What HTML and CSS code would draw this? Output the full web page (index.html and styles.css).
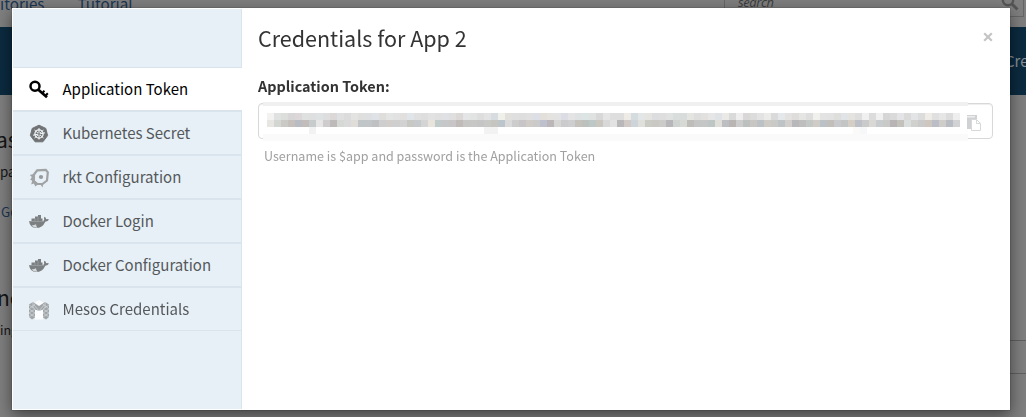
FILE: index.html
```html
<!DOCTYPE html>
<html lang="en">
<head>
<meta charset="utf-8">
<title>Credentials for App 2</title>
<link rel="stylesheet" href="styles.css">
</head>
<body>
<div class="page">
  <header class="navbar">
    <nav class="nav-links"><a>itories</a><a>Tutorial</a></nav>
    <div class="search"><span>search</span>
      <svg width="18" height="18" viewBox="0 0 18 18"><circle cx="7" cy="6" r="5.2" fill="none" stroke="#555" stroke-width="2.4"/><path d="M11 10l5.5 5.5" stroke="#555" stroke-width="3"/></svg>
    </div>
  </header>
  <div class="banner"><span>Cre</span></div>
  <main class="page-body">
    <section class="page-copy">
      <h2>as</h2>
      <p>pa</p>
      <a class="go">Go</a>
      <h2 class="second">nc</h2>
      <p class="note">ing</p>
    </section>
    <aside class="rows"></aside>
  </main>
</div>

<div class="modal">
  <ul class="sidebar">
    <li class="spacer"></li>
    <li class="item active">
      <svg class="icon" viewBox="0 0 20 20"><g fill="none" stroke="#000"><circle cx="6" cy="6.2" r="4.5" stroke-width="2.5"/><path d="M8.800 9.200L18 17.300" stroke-width="2.700"/><path d="M13.200 13.300l2.200-2.600M16.300 16l2.500-2.700" stroke-width="2"/></g></svg>
      <span>Application Token</span>
    </li>
    <li class="item">
      <svg class="icon" viewBox="0 0 20 20"><path d="M10 1.200l6.800 3.200 1.800 7.200-4.700 6.200H6.100l-4.700-6.200L3.200 4.400z" fill="#707274" stroke="#707274" stroke-linejoin="round"/><g fill="none" stroke="#f4f8fa"><circle cx="10" cy="10" r="4.100" stroke-width="1.300"/><path d="M10 4v11.500M5.500 6l9 8M14.500 6l-9 8M4 11.200l12-2.400" stroke-width="1"/></g><circle cx="10" cy="10" r="1" fill="#707274"/></svg>
      <span>Kubernetes Secret</span>
    </li>
    <li class="item">
      <svg class="icon" viewBox="0 0 20 20"><path d="M5 6.500L8.200 2.300l8.600-.5 2 2.500-.8 8.200-4.500 3.500H8.500L4.800 13z" fill="none" stroke="#a0a2a4" stroke-width="2.200"/><path d="M4.500 6L.8 7l2 2-1.600 3 2 .4-1 4 2.600-1 1.600 3 2.400-2 3 .6 1.800 2.600.6-4-6-.6-3.600-3.500z" fill="#a0a2a4"/><circle cx="12" cy="9" r="2.100" fill="#96989a"/></svg>
      <span>rkt Configuration</span>
    </li>
    <li class="item">
      <svg class="icon" viewBox="0 0 20 20"><use href="#whale"/></svg>
      <span>Docker Login</span>
    </li>
    <li class="item">
      <svg class="icon" viewBox="0 0 20 20"><defs><g id="whale"><path d="M2.500 6.500H6V4.500h3V3h3v3.500h1.500V9H2.500z" fill="#7c7f81"/><path d="M0 9h13.500q2-.2 1.700-1.500-.7-1.500.3-2.700 1.700.8 1.700 2.400 1.500-.3 2.800.4-.8 2-3.700 2.100Q13.500 16 7 16 1 16 0 9z" fill="#7c7f81"/><path d="M0 9.500h15M6 6.500v3M9 5v4.500" stroke="#a4a8aa" stroke-width=".6"/><path d="M2.500 13.500q3-.3 4.500-1.200 0 2 1.500 3.400-3.500.3-6-2.200z" fill="#d3d9dc"/></g></defs><use href="#whale"/></svg>
      <span>Docker Configuration</span>
    </li>
    <li class="item last">
      <svg class="icon" viewBox="0 0 20 20"><path d="M5 3l5-3 5 3-5 5zM6 10l4-2 4 2v9.500H6z" fill="#fbfcfd"/><path d="M0 4.500l4-2.500 6 4 6-4 4 2.500V17l-3 2.500-3-2V9.500L10 11 6 9.500v8l-3 2L0 17z" fill="#a1a5a7"/><path d="M4 2v6M0 5l6 4-6 4 6 4M6 4L0 9l6 4-6 4M16 2v6M20 5l-6 4 6 4-6 4M14 4l6 5-6 4 6 4M5 5l5 6 5-6" fill="none" stroke="#dce3e7" stroke-width=".6"/></svg>
      <span>Mesos Credentials</span>
    </li>
  </ul>
  <div class="content">
    <div class="heading"><h1>Credentials for App 2</h1>
      <svg class="close" width="10" height="10" viewBox="0 0 10 10"><path d="M1.200 1.200l7.600 7.600M8.800 1.200L1.200 8.800" stroke="#c4c4c4" stroke-width="2.200"/></svg>
    </div>
    <label>Application Token:</label>
    <div class="token-box">
      <div class="masked"><svg id="mosaic" width="709" height="39" shape-rendering="crispEdges"></svg></div>
      <svg class="copy" width="15" height="17" viewBox="0 0 15 17"><path d="M0 0h10v4H7q-3 1-3 3v7H0z" fill="#d0d1d2"/><path d="M0 1h8v1.500H0z" fill="#eee"/><path d="M4.500 4.500h5l4 4v7h-9zM9.500 4.500v4h4" fill="#fff" stroke="#d6d8da"/></svg>
    </div>
    <p class="hint">Username is $app and password is the Application Token</p>
  </div>
</div>
<script src="mosaic.js"></script>
</body>
</html>
```
FILE: styles.css
```css
* { box-sizing: border-box; }
body {
  margin: 0;
  height: 417px;
  overflow: hidden;
  background: #7f7f7f;
  font-family: "Noto Sans CJK SC", "Noto Sans", sans-serif;
}
h1, h2, p, ul { margin: 0; padding: 0; font-weight: 400; }
.page { height: 417px; overflow: hidden; }
.navbar { height: 27px; display: flex; justify-content: space-between; align-items: flex-start; padding-right: 2px; }
.nav-links { display: flex; gap: 33px; margin: -9px 0 0 0; font-size: 15.200px; line-height: 24px; color: #1b3653; }
.search { width: 300px; height: 17px; display: flex; justify-content: space-between; padding: 0 4px 0 13px; border: 1px solid #666; border-top: 0; }
.search span { margin-top: -8px; font: italic 13px/20px "Open Sans", sans-serif; letter-spacing: -.4px; color: #3c3c3c; }
.search svg { margin-top: -6px; }
.banner { height: 68px; background: #0b2b40; display: flex; justify-content: flex-end; align-items: center; }
.banner span { width: 21px; font-size: 15px; line-height: 24px; color: #8a9095; }
.page-body { display: flex; justify-content: space-between; }
.page-copy { width: 40px; color: #151515; }
.page-copy h2 { margin: 29px 0 0 -4px; font-size: 21px; line-height: 30px; }
.page-copy p { margin-top: 8px; font-size: 13.300px; line-height: 20px; }
.page-copy .go { display: block; margin: 20px 0 0 1px; font-size: 13.300px; line-height: 20px; color: #1b3653; }
.page-copy .second { margin-top: 60px; margin-left: -3px; }
.page-copy .note { margin-top: 8px; font-size: 12.500px; }
.rows { width: 20px; height: 34px; margin-top: 245px; border: solid #606060; border-width: 1px 0; }

.modal {
  position: fixed;
  left: 12px;
  top: 8px;
  width: 998px;
  height: 402px;
  display: flex;
  padding: 1px;
  background: #fff;
  box-shadow: 0 0 0 .5px rgba(0,0,0,.2), 0 5px 15px rgba(0,0,0,.5);
}
.sidebar { width: 229px; height: 400px; list-style: none; background: #e7f0f6; border-right: 1px solid #dae4ec; }
.spacer { height: 59px; border-bottom: 1px solid #dae4ec; }
.item { height: 44px; display: flex; align-items: center; gap: 13.500px; border-bottom: 2px solid #dae4ec; padding: 1px 0 0 16px; font-size: 15px; line-height: 24px; color: #55585b; }
.item span { margin-top: -1px; }
.item.active { width: 229px; background: #fff; color: #000; }
.item.last { border-bottom-width: 1px; height: 43px; }
.icon { width: 20px; height: 20px; flex: none; }
.content { flex: 1; padding: 14px 16px 0 16px; }
.heading { display: flex; justify-content: space-between; height: 30px; }
.heading h1 { font-size: 21.500px; line-height: 30px; color: #333; white-space: nowrap; }
.close { margin-top: 9px; }
.content label { display: block; margin-top: 22px; font-size: 14.400px; font-weight: 700; line-height: 22px; color: #333; }
.token-box { height: 36px; margin-top: 6px; display: flex; align-items: center; border: 1px solid #d8d8d8; border-radius: 4px; box-shadow: inset 0 1px 1px rgba(0,0,0,.07); }
.masked { width: 709px; height: 39px; flex: none; }
.masked svg { display: block; }
.copy { margin-top: 4px; margin-left: -1px; }
.hint { margin: 7px 0 0 6px; font-size: 12.550px; line-height: 20px; color: #a0a0a0; }
```
FILE: mosaic.js
```js
const svg = document.getElementById("mosaic");
function block(x, y, w, h, fill) {
  const r = document.createElementNS("http://www.w3.org/2000/svg", "rect");
  for (const [k, v] of Object.entries({ x, y, width: w, height: h, fill })) r.setAttribute(k, v);
  svg.appendChild(r);
}
const top1 = "f3f2f0 e0e2e2 dcdedc d8d6d6 dcd8da dfe1e1 dedfe0 dfe2e2 dededf dcd8d8 dfe0e2 dcdcdc e3e3e1 dfdfde dedfe0 dfe2e6 dfdeda e3e4e4 e2e2e2 e2e0de dfe5e9 e0e0e0 dfdedf e2e2e2 e0e0e0 dfe1e4 dfdfe0 dcd8d8 e3e5e6 e2e3e3 dedede e3e3e3 d6dce0 eff0ea e1e0dc e0dfdf dedede e0e0e0 dcdfe6 e3e0dc e5e3e0 e3e3e3 dcdce5 e4e4e4 dfe2e3 dce5e4 e0e2e2 d8d8d8 e5e5e5 dedede dedede eeebe7 d5dce0 e3e6e7 e5e4e1 dcdddf dfdedf dfe2e1 d9dddc d8dcda e4e4e1 dededf e2e1df e6e6e6 dfe3e5 ebe9e7 dadada eeeeee dad8d6 dcdcdc e3e3e3 ebebe9 dadada e5e8ea e3e2e0 dfdddb e5e5e4 dedede f0f0ed e3e3e3 e2e2e2 dedfdd e0e4e6 e5e3df dedede f0f0f0 dcdcdc f0f0f0 d6d6d6 dadada e4e4e6 dadada e3e4e5 dcdcdc efece8 e0e0e0 e6e6e6 dcdcdc eeeeee".split(" ");
const top2 = "e8e6e2 d4d6d4 cac9c5 c6c0bc b9bdc3 c2bdbb c6cccc e6e6e6 cecccc bfbaba d6d8d6 dadada e0dcd8 c0c6c8 c1c5c8 bfc0c1 cecece d2cecc cfcfcf d3d2d3 c7c7c3 c6cacc d3d4d3 e8e4dc c0cbca c5c7c9 c8c5c6 c0bab8 c6c6c5 c7c7c6 c5c5c6 c8c8c6 c6c5c0 bcc5cb dadada cccccd c8c5c6 d0cbc6 cacaca bec0ce bbb7b8 d6d6d5 cbcbcd cecdcf c5c2bb bdc1bd bdc7c6 cac7c1 d8d8d8 e2e2e2 b9b7ba d0c9c6 cdd5da dfdfdc cbcbc6 cac8c3 cbcbca b7b6b8 ced2d1 d7d9d5 bebdb9 c5c5c5 c5c7c6 bec5c5 dfded9 bdbec1 b8b5b3 cccccc bcc0bf c8c6c2 bcc1c5 cecbc5 c9c9c7 bec3c5 d1cecd b8b8ba bebebf c3c7c6 cfcbc7 bbc2c7 c2beba c8c9ca c2c4c5 d5cec5 bdc0c7 cacaca d9d8d4 c9cccf c9c9c7 b8b4b6 c2c1bb dadedd d0d0ce cacaca cdc7c0 bbbec6 cecdc9 b9bcc2 d0d2d4".split(" ");
block(4, 0, 705, 4, "#f0f0f0");
block(4, 4, 705, 28, "#ffffff");
block(4, 32, 705, 7, "#fafafa");
top1.forEach((c, i) => block(8 + i * 7, 11, 7, 7, "#" + c));
top2.forEach((c, i) => block(8 + i * 7, 18, 7, 7, "#" + c));
block(50, 25, 7, 7, "#f2f2f2");
block(225, 25, 14, 7, "#f2f2f2");
block(594, 25, 7, 7, "#fcfaf9");
block(601, 25, 7, 7, "#f6f7f9");
```
